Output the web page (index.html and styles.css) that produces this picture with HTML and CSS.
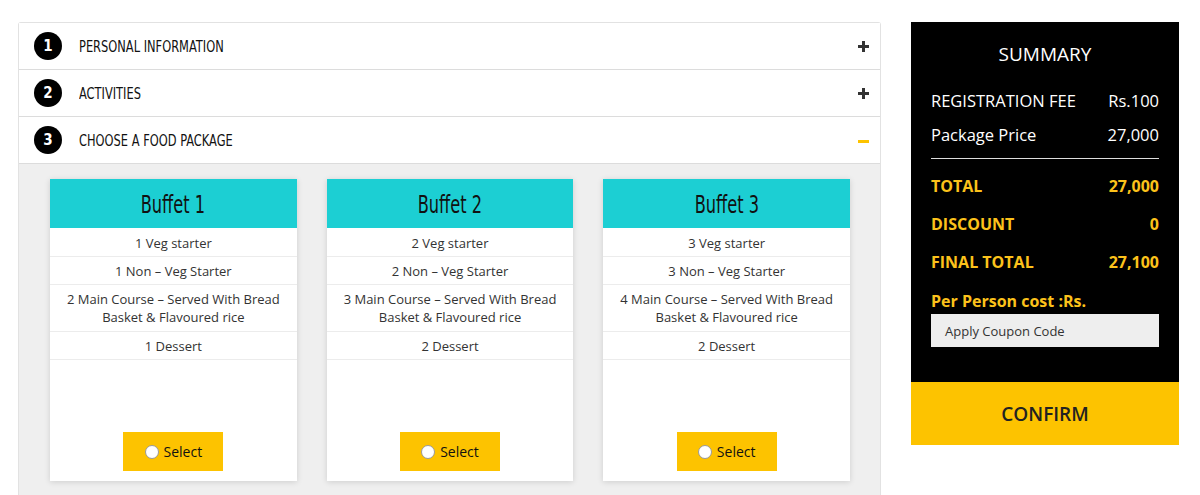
FILE: index.html
```html
<!DOCTYPE html>
<html lang="en">
<head>
<meta charset="utf-8">
<title>Booking</title>
<link rel="stylesheet" href="styles.css">
</head>
<body>
<div class="page">
  <div class="accordion">
    <div class="acc-head">
      <span class="num">1</span>
      <span class="acc-title"><span class="narrow">PERSONAL INFORMATION</span></span>
      <span class="toggle plus"></span>
    </div>
    <div class="acc-head">
      <span class="num">2</span>
      <span class="acc-title"><span class="narrow">ACTIVITIES</span></span>
      <span class="toggle plus"></span>
    </div>
    <div class="acc-head">
      <span class="num">3</span>
      <span class="acc-title"><span class="narrow">CHOOSE A FOOD PACKAGE</span></span>
      <span class="toggle minus"></span>
    </div>
    <div class="acc-panel">
      <div class="card">
        <div class="card-head"><span class="narrow-c">Buffet 1</span></div>
        <ul class="items">
          <li>1 Veg starter</li>
          <li>1 Non – Veg Starter</li>
          <li>2 Main Course – Served With Bread Basket &amp; Flavoured rice</li>
          <li>1 Dessert</li>
        </ul>
        <div class="card-foot"><label class="select"><span class="radio"></span>Select</label></div>
      </div>
      <div class="card">
        <div class="card-head"><span class="narrow-c">Buffet 2</span></div>
        <ul class="items">
          <li>2 Veg starter</li>
          <li>2 Non – Veg Starter</li>
          <li>3 Main Course – Served With Bread Basket &amp; Flavoured rice</li>
          <li>2 Dessert</li>
        </ul>
        <div class="card-foot"><label class="select"><span class="radio"></span>Select</label></div>
      </div>
      <div class="card">
        <div class="card-head"><span class="narrow-c">Buffet 3</span></div>
        <ul class="items">
          <li>3 Veg starter</li>
          <li>3 Non – Veg Starter</li>
          <li>4 Main Course – Served With Bread Basket &amp; Flavoured rice</li>
          <li>2 Dessert</li>
        </ul>
        <div class="card-foot"><label class="select"><span class="radio"></span>Select</label></div>
      </div>
    </div>
  </div>

  <aside class="summary">
    <div class="sum-box">
      <h2 class="sum-title">SUMMARY</h2>
      <div class="sum-row first"><span>REGISTRATION FEE</span><span>Rs.100</span></div>
      <div class="sum-row"><span>Package Price</span><span>27,000</span></div>
      <hr class="sum-rule">
      <div class="sum-row gold"><span>TOTAL</span><span>27,000</span></div>
      <div class="sum-row gold"><span>DISCOUNT</span><span>0</span></div>
      <div class="sum-row gold"><span>FINAL TOTAL</span><span>27,100</span></div>
      <div class="sum-row gold"><span>Per Person cost :Rs.</span></div>
      <div class="coupon">Apply Coupon Code</div>
    </div>
    <div class="confirm">CONFIRM</div>
  </aside>
</div>
</body>
</html>
```

FILE: styles.css
```css
* { box-sizing: border-box; }
html, body { margin: 0; padding: 0; background: #fff; }
body { font-family: "Open Sans", "Liberation Sans", sans-serif; color: #333; }

.page {
  display: flex;
  align-items: flex-start;
  gap: 30px;
  padding: 22px 21px 0 18px;
}

.accordion {
  width: 863px;
  border: 1px solid #e2e2e2;
  border-bottom: none;
  border-radius: 3px 3px 0 0;
}

.acc-head {
  height: 47px;
  display: flex;
  align-items: center;
  padding: 0 11px 0 15px;
  border-bottom: 1px solid #dcdcdc;
  background: #fff;
}

.num {
  width: 28px;
  height: 28px;
  border-radius: 50%;
  background: #000;
  color: #fff;
  display: flex;
  align-items: center;
  justify-content: center;
  font-family: "DejaVu Sans Condensed", "DejaVu Sans", sans-serif;
  font-stretch: condensed;
  font-weight: bold;
  font-size: 15px;
}

.acc-title {
  flex: 1;
  margin-left: 17px;
  font-family: "DejaVu Sans Condensed", "DejaVu Sans", sans-serif;
  font-stretch: condensed;
  font-size: 16.5px;
  color: #111;
}
.narrow {
  display: inline-block;
  transform: scaleX(0.77);
  transform-origin: left center;
  white-space: nowrap;
}

.toggle { position: relative; width: 11px; height: 11px; }
.toggle::before, .toggle::after {
  content: "";
  position: absolute;
  background: #333;
}
.toggle::before { left: 0; right: 0; top: 4px; height: 3px; }
.plus::after { top: 0; bottom: 0; left: 4px; width: 3px; }
.minus::before { background: #fdc300; top: 5px; }
.minus::after { display: none; }

.acc-panel {
  background: #efefef;
  padding: 15px 30px 14px 31px;
  display: flex;
  gap: 30px;
}

.card {
  width: 247px;
  height: 302px;
  background: #fff;
  box-shadow: 0 1px 6px rgba(0,0,0,0.14);
  display: flex;
  flex-direction: column;
}

.card-head {
  height: 49px;
  background: #1ccfd3;
  display: flex;
  align-items: center;
  justify-content: center;
  padding-top: 3px;
  font-family: "DejaVu Sans Condensed", "DejaVu Sans", sans-serif;
  font-stretch: condensed;
  font-size: 24px;
  color: #111;
}
.narrow-c {
  display: inline-block;
  transform: scaleX(0.75);
  white-space: nowrap;
}

.items { list-style: none; margin: 0; padding: 0; }
.items li {
  text-align: center;
  font-size: 13px;
  line-height: 18px;
  padding: 5px 14px 4px;
  border-bottom: 1px solid #ececec;
  color: #333;
}
.items li:first-child { padding-top: 6px; }
.items li:nth-child(3) { padding-bottom: 5px; }

.card-foot {
  margin-top: auto;
  display: flex;
  justify-content: center;
  padding-bottom: 10px;
}

.select {
  width: 100px;
  height: 39px;
  background: #fdc300;
  display: flex;
  align-items: center;
  justify-content: center;
  gap: 5px;
  font-size: 14px;
  color: #111;
}

.radio {
  width: 14px;
  height: 14px;
  border-radius: 50%;
  background: #fff;
  border: 1px solid #999;
}

.summary { width: 268px; }

.sum-box {
  background: #000;
  padding: 20px 20px 35px;
  color: #fff;
}

.sum-title {
  margin: 0;
  text-align: center;
  font-weight: normal;
  font-size: 19px;
  line-height: 24px;
}

.sum-row {
  display: flex;
  justify-content: space-between;
  font-size: 16.5px;
  line-height: 24px;
  margin-top: 10px;
}
.sum-row.first { margin-top: 23px; }

.sum-rule {
  border: none;
  border-top: 1px solid #ddd;
  margin: 11px 0 0;
}

.sum-row.gold {
  color: #fcc21b;
  font-weight: bold;
  font-size: 16px;
  margin-top: 14px;
}
.sum-rule + .sum-row.gold { margin-top: 15px; }
.sum-row.gold:nth-of-type(n+6) { margin-top: 15px; }

.coupon {
  height: 33px;
  margin-top: 1px;
  background: #eee;
  color: #333;
  font-size: 13px;
  display: flex;
  align-items: center;
  padding-left: 14px;
}

.confirm {
  height: 63px;
  background: #fdc300;
  color: #222;
  display: flex;
  align-items: center;
  justify-content: center;
  font-size: 19px;
  font-weight: 600;
}
```
